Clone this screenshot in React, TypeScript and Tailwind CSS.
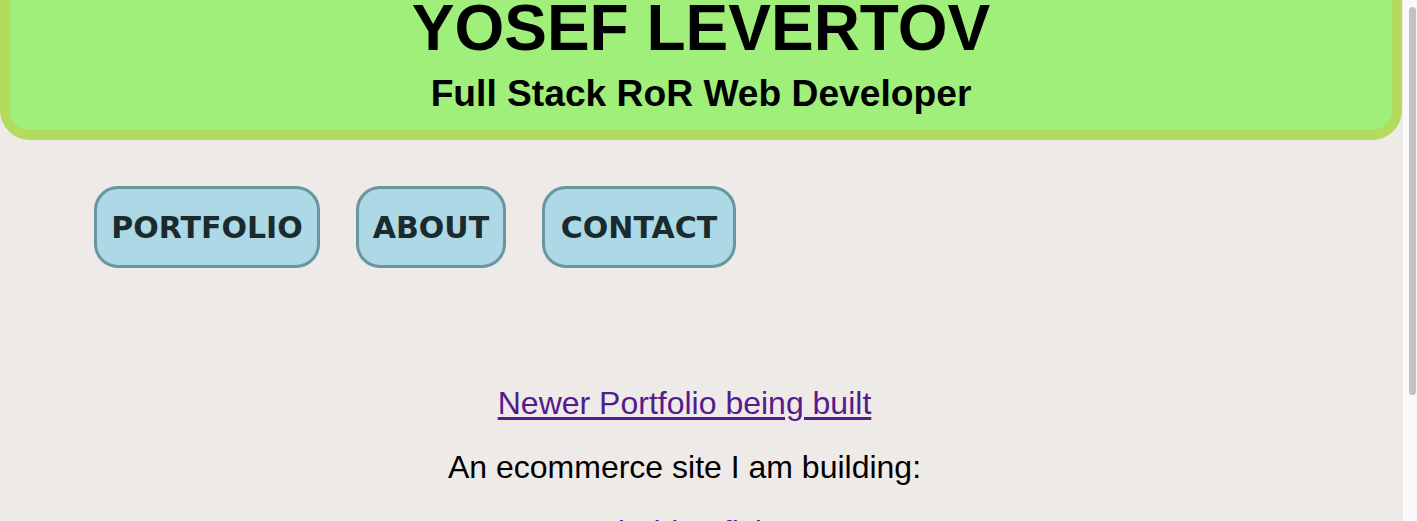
import React from "react";

const navItems = [
  { label: "PORTFOLIO", width: "w-[226px]" },
  { label: "ABOUT", width: "w-[150px]" },
  { label: "CONTACT", width: "w-[194px]" },
];

const App = () => {
  return (
    <div className="flex h-[521px] w-full overflow-hidden bg-[#eeeae7]">
      <div className="flex-1 flex flex-col">
        <header
          className="mr-[1px] flex flex-col items-center border-x-[10px] border-b-[10px] border-[#b3dc5e] bg-[#a0ef7a] rounded-b-[30px] pb-[15px] text-black font-bold"
          style={{ fontFamily: '"Liberation Sans", Arial, sans-serif' }}
        >
          <h1 className="text-[64px] leading-[56px]">YOSEF LEVERTOV</h1>
          <h2 className="mt-[15px] text-[37.2px] leading-[44px]">Full Stack RoR Web Developer</h2>
        </header>

        <nav className="mt-[46px] ml-[94px] flex gap-[36px]">
          {navItems.map((item) => (
            <a
              key={item.label}
              href="#"
              className={`${item.width} h-[82px] flex items-center justify-center rounded-[24px] border-[3px] border-[#6a96a0] bg-[#add8e6] text-[30px] font-bold text-[#1b2a2c]`}
              style={{ fontFamily: '"Comic Sans MS", "DejaVu Sans", sans-serif' }}
            >
              {item.label}
            </a>
          ))}
        </nav>

        <section
          className="mt-[117px] pr-[34px] flex flex-col items-center text-[32px] leading-[37px] text-black"
          style={{ fontFamily: '"Liberation Sans", Arial, sans-serif' }}
        >
          <a href="#" className="text-[#551a8b] underline underline-offset-[3px]">
            Newer Portfolio being built
          </a>
          <p className="mt-[27px]">An ecommerce site I am building:</p>
          <a href="#" className="mt-[28px] text-[#551a8b] underline underline-offset-[3px]">
            Sheldon fish
          </a>
        </section>
      </div>

      <div className="w-[14px] shrink-0 bg-[#fafafa] pt-[7px] pl-[6px] pr-[1px]">
        <div className="h-[388px] rounded-full bg-[#c2c2c2]" />
      </div>
    </div>
  );
};

export default App;
